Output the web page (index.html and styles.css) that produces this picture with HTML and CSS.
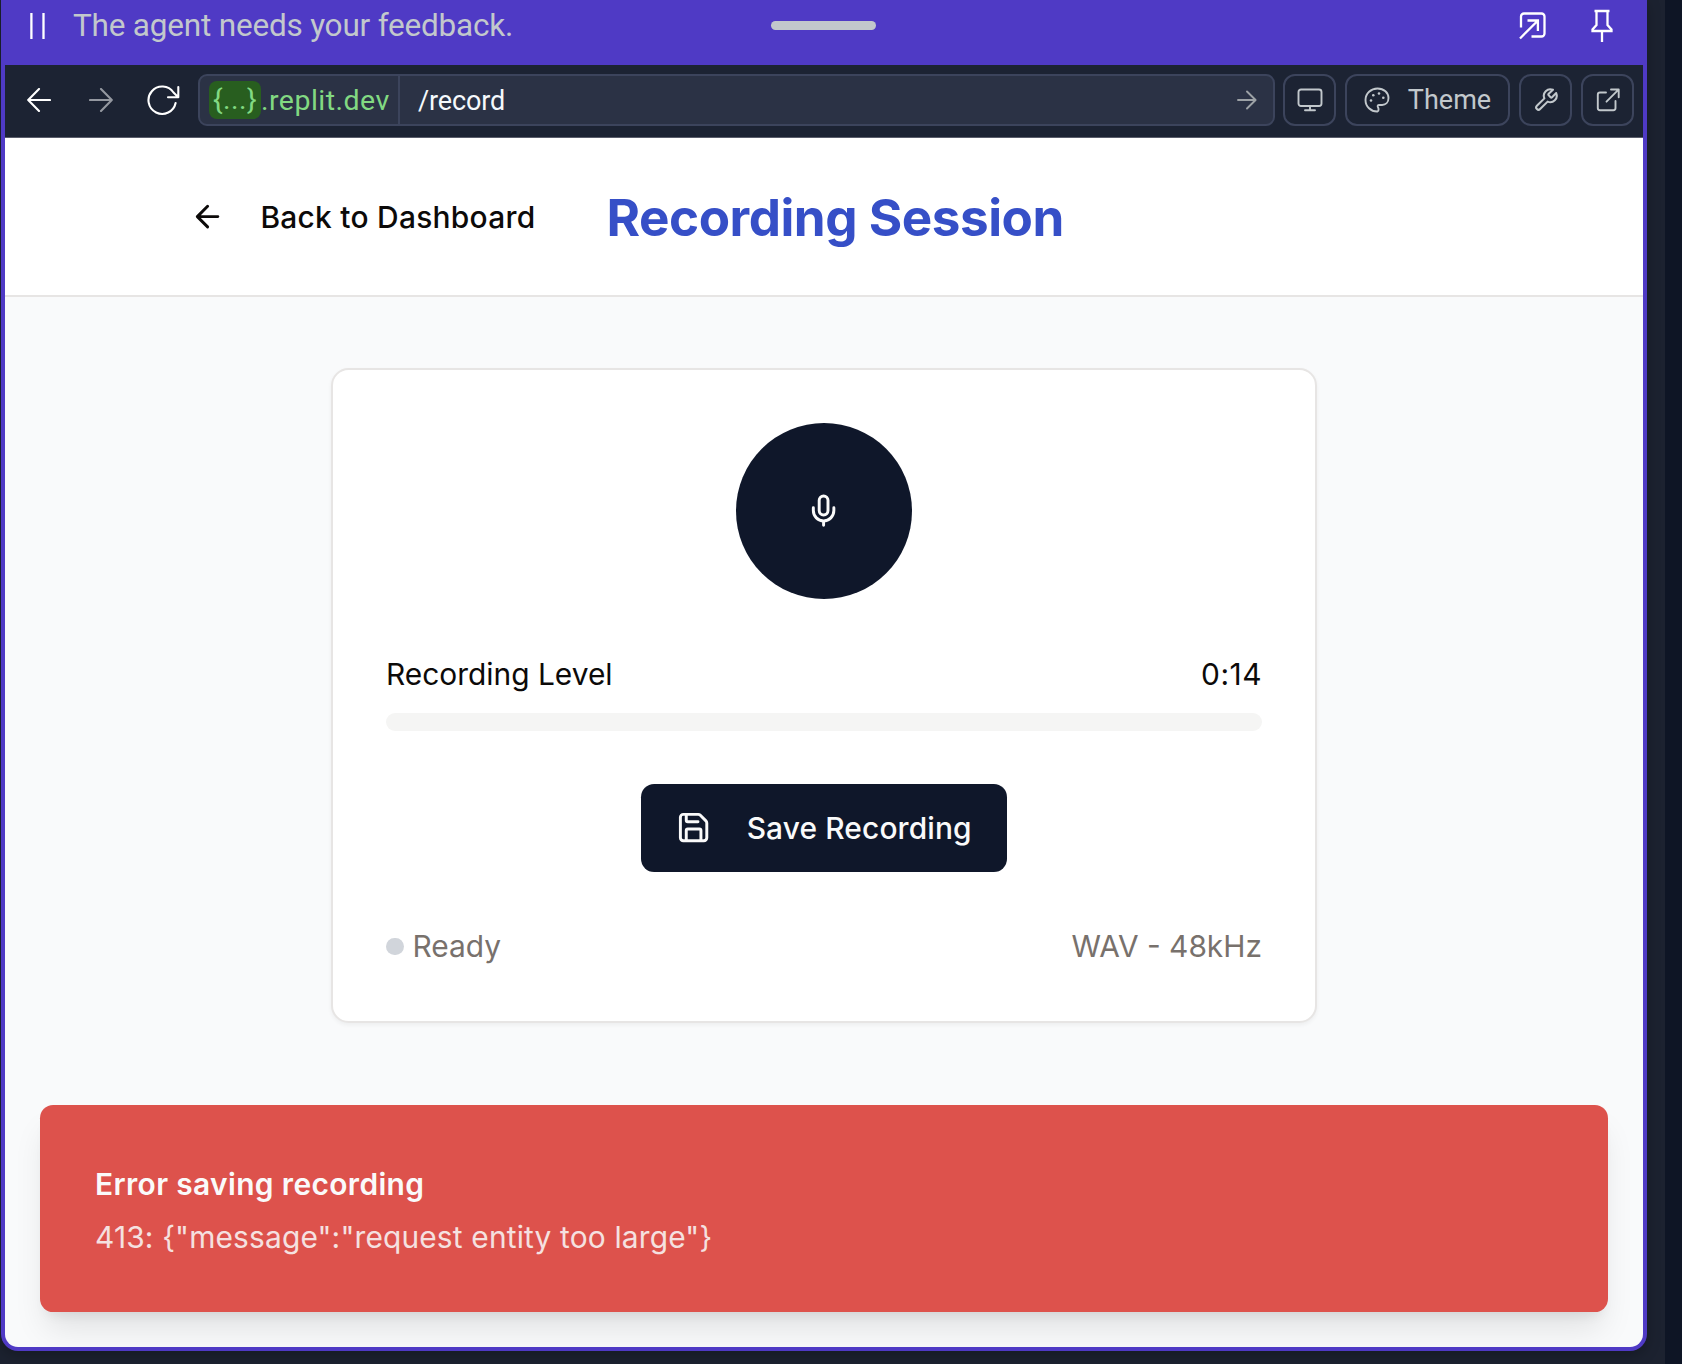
FILE: index.html
```html
<!DOCTYPE html>
<html lang="en">
<head>
<meta charset="utf-8">
<title>Recording Session</title>
<link rel="stylesheet" href="styles.css">
</head>
<body>
<div class="window">
  <div class="agent-bar">
    <div class="agent-status">
      <svg class="pause" width="16" height="28" viewBox="0 0 16 28"><path d="M1.4 1v26M13.5 1v26"/></svg>
      <span class="agent-text">The agent needs your feedback.</span>
    </div>
    <div class="handle"></div>
    <div class="agent-actions">
      <svg width="30" height="30" viewBox="0 0 30 30"><path d="M4 16.500V5.500a3 3 0 0 1 3-3h17.500a3 3 0 0 1 3 3v17a3 3 0 0 1-3 3H14.500M3 27.500 20.700 9.700M10.500 9.500h10.400v10.500"/></svg>
      <svg width="24" height="34" viewBox="0 0 24 34"><path d="M4.500 2h15M6.500 2v14l-4 4.500v1.500h19v-1.500l-4-4.500V2M12 22v11"/></svg>
    </div>
  </div>
  <div class="toolbar">
    <div class="nav">
      <svg width="24" height="24" viewBox="0 0 24 24"><path d="M23 12H1.500M12 1 1.200 12 12 23"/></svg>
      <svg class="dim" width="24" height="24" viewBox="0 0 24 24"><path d="M1 12h21.500M12 1l10.800 11L12 23"/></svg>
      <svg width="34" height="32" viewBox="0 0 34 32"><path d="M28.600 19A13.700 13.700 0 1 1 26.500 8.500L31 13M31.300 3v10.200H21"/></svg>
    </div>
    <div class="address">
      <div class="host"><span class="token">{...}</span><span class="domain">.replit.dev</span></div>
      <div class="path"><span class="path-text">/record</span>
        <svg width="20" height="20" viewBox="0 0 20 20"><path d="M1 10h17.500M10 1.500l8.600 8.500L10 18.500"/></svg>
      </div>
    </div>
    <div class="tools">
      <div class="tool"><svg width="26" height="24" viewBox="0 0 26 24"><rect x="1.500" y="1.500" width="23" height="16.500" rx="2.500"/><path d="M13 18v4M8 22.200h10"/></svg></div>
      <div class="tool theme">
        <svg width="26" height="26" viewBox="0 0 26 26"><path d="M13.500 24.500C6.800 24.700 1.500 19.500 1.500 13S7 1.500 13.500 1.500c6.500 0 11 4.300 11 9.600 0 4.400-3 6.900-6.400 6.900H15c-1.300 0-1.600 1-1.100 2 .8 1.500 1.100 3.800-.4 4.500z"/><g class="dots"><circle cx="7" cy="13.500" r="1.300"/><circle cx="9.300" cy="8.300" r="1.300"/><circle cx="15" cy="6.500" r="1.300"/><circle cx="19.300" cy="10.800" r="1.300"/></g></svg>
        <span>Theme</span>
      </div>
      <div class="tool"><svg width="26" height="26" viewBox="0 0 24 24"><path d="M14.500 6.300a1 1 0 0 0 0 1.400l1.700 1.700a1 1 0 0 0 1.400 0l3.800-3.800a6 6 0 0 1-7.900 7.900l-6.900 6.900a2.100 2.100 0 0 1-3-3l6.900-6.900a6 6 0 0 1 7.900-7.900z"/></svg></div>
      <div class="tool"><svg width="24" height="24" viewBox="0 0 24 24"><path d="M10 4.500H4a2.200 2.200 0 0 0-2.200 2.200v13.300A2.200 2.200 0 0 0 4 22.200h13.300a2.200 2.200 0 0 0 2.200-2.200v-7M15 1.500h7.700v7.700M22.500 1.700 10.500 13.700"/></svg></div>
    </div>
  </div>
  <div class="page">
    <header class="page-header">
      <a class="back">
        <svg class="icon" viewBox="0 0 24 24"><path d="m12 19-7-7 7-7M19 12H5"/></svg>
        <span>Back to Dashboard</span>
      </a>
      <h1>Recording Session</h1>
    </header>
    <main>
      <section class="card">
        <div class="mic"><svg class="icon" viewBox="0 0 24 24"><path d="M12 2a3 3 0 0 0-3 3v7a3 3 0 0 0 6 0V5a3 3 0 0 0-3-3ZM19 10v2a7 7 0 0 1-14 0v-2M12 19v3"/></svg></div>
        <div class="level">
          <div class="row"><span>Recording Level</span><span class="time">0:14</span></div>
          <div class="meter"></div>
        </div>
        <div class="save">
          <svg class="icon" viewBox="0 0 24 24"><path d="M15.200 3a2 2 0 0 1 1.400.6l3.800 3.800a2 2 0 0 1 .6 1.400V19a2 2 0 0 1-2 2H5a2 2 0 0 1-2-2V5a2 2 0 0 1 2-2zM17 21v-7a1 1 0 0 0-1-1H8a1 1 0 0 0-1 1v7M7 3v4a1 1 0 0 0 1 1h7"/></svg>
          <span class="save-text">Save Recording</span>
        </div>
        <div class="row meta"><span class="state"><i class="dot"></i>Ready</span><span>WAV - 48kHz</span></div>
      </section>
    </main>
    <div class="toast">
      <div class="toast-title">Error saving recording</div>
      <div class="toast-text">413: {"message":"request entity too large"}</div>
    </div>
  </div>
</div>
</body>
</html>
```
FILE: styles.css
```css
* { box-sizing: border-box; }
body {
  margin: 0;
  height: 1364px;
  padding-left: 1px;
  overflow: hidden;
  background: linear-gradient(to right, #1c2230 1665px, #0e1525 1665px);
  font-family: Inter, "Liberation Sans", sans-serif;
}
svg { display: block; flex: none; fill: none; stroke: currentColor; stroke-linecap: round; stroke-linejoin: round; }
.window {
  width: 1646px;
  height: 1351px;
  display: flex;
  flex-direction: column;
  border: solid #4f3ac5;
  border-width: 0 4px 4px;
  border-radius: 0 0 17px 17px;
  background: #4f3ac5;
  box-shadow: 0 4px 14px rgba(0, 0, 0, .25);
}
.agent-bar {
  height: 65px;
  padding: 0 29px 14px 25px;
  display: grid;
  grid-template-columns: 741px 105px 1fr;
  align-items: center;
  color: #fff;
}
.agent-status { display: flex; align-items: center; gap: 27px; }
.agent-bar svg { stroke-width: 2.3; stroke-linecap: butt; stroke-linejoin: miter; }
.agent-text { padding-top: 1px; font-family: Roboto, sans-serif; font-size: 31.500px; line-height: 40px; letter-spacing: -.2px; color: #c2c8cc; }
.handle { height: 9px; border-radius: 5px; background: #c2c8cc; }
.agent-actions { display: flex; justify-content: flex-end; align-items: center; gap: 43px; }
.toolbar {
  height: 73px;
  padding: 0 9px 2px 22px;
  display: flex;
  align-items: center;
  background: #1c2333;
  border-bottom: 1px solid #5a5d6b;
  color: #c2c8cc;
  font-family: Roboto, sans-serif;
  font-size: 27px;
}
.toolbar svg { stroke-width: 1.9; }
.nav { display: flex; align-items: center; gap: 38px; color: #fff; }
.nav svg { stroke-width: 2.1; }
.nav .dim { color: #9498a0; }
.nav svg:last-child { margin-left: -4px; }
.address {
  margin-left: 17px;
  width: 1078px;
  height: 52px;
  display: flex;
  border: 2px solid #3c445c;
  border-radius: 9px;
  background: #2b3245;
}
.host { width: 200px; padding-left: 9px; display: flex; align-items: center; border-right: 2px solid #3c445c; color: #82d982; font-size: 28.500px; letter-spacing: .48px; }
.token { width: 52px; height: 38px; border-radius: 8px; background: #285e1f; line-height: 37px; text-align: center; }
.path { flex: 1; padding: 0 16px 0 18px; display: flex; align-items: center; justify-content: space-between; color: #f5f9fc; }
.path-text { padding-top: 1px; letter-spacing: -.15px; }
.path svg { color: #9da2a6; }
.tools { margin-left: 8.500px; display: flex; gap: 9px; }
.tool { width: 53px; height: 52px; display: flex; align-items: center; justify-content: center; border: 2px solid #3c445c; border-radius: 12px; }
.tool.theme { width: 165px; gap: 18px; }
.theme .dots { fill: currentColor; stroke: none; }
.page { flex: 1; position: relative; overflow: hidden; border-radius: 0 0 13px 13px; background: #f9fafb; }
.page-header {
  height: 159px;
  padding-left: 185px;
  display: flex;
  align-items: center;
  background: #fff;
  border-bottom: 2px solid #e7e5e4;
  color: #0c0a09;
}
.icon { width: 35.2px; height: 35.2px; stroke-width: 2; }
.back { padding-top: 1px; display: flex; align-items: center; gap: 35.2px; font-size: 29.9px; font-weight: 500; letter-spacing: .28px; }
h1 { margin: 0 0 0 71px; padding-top: 1px; font-size: 51.2px; font-weight: 700; line-height: 70px; letter-spacing: -.48px; color: #364fc7; }
main { padding-top: 71px; display: flex; justify-content: center; }
.card {
  width: 985.600px;
  padding: 52.800px;
  display: flex;
  flex-direction: column;
  align-items: center;
  gap: 52.800px;
  border: 2px solid #e7e5e4;
  border-radius: 17.600px;
  background: #fff;
  box-shadow: 0 2px 4px rgba(0, 0, 0, .05);
  font-size: 29.9px;
  line-height: 45px;
  color: #0c0a09;
}
.mic { width: 176px; height: 176px; display: grid; place-items: center; border-radius: 50%; background: #0f172a; color: #fafafa; }
.level { width: 100%; display: grid; gap: 17.600px; }
.row { width: 100%; height: 44px; display: flex; justify-content: space-between; }
.time { letter-spacing: .5px; }
.meter { height: 17.600px; border-radius: 9px; background: #f5f5f4; }
.save {
  height: 88px;
  padding: 0 35.200px;
  display: flex;
  align-items: center;
  gap: 35.200px;
  border-radius: 13.200px;
  background: #0f172a;
  color: #fafafa;
  font-weight: 500;
}
.save-text { padding-top: 1px; letter-spacing: .13px; }
.meta { color: #78716c; }
.state { display: flex; align-items: center; gap: 8.800px; }
.dot { width: 17.600px; height: 17.600px; border-radius: 50%; background: #d1d5db; }
.toast {
  position: absolute;
  left: 35px;
  right: 35px;
  bottom: 35px;
  padding: 56.500px 55px 53.500px;
  display: grid;
  gap: 8.800px;
  border-radius: 13.200px;
  background: #dd524c;
  box-shadow: 0 22px 33px -6.600px rgba(0, 0, 0, .1), 0 8.800px 13px -8.800px rgba(0, 0, 0, .1);
  color: #fafafa;
  font-size: 29.9px;
  line-height: 44px;
}
.toast-title { font-weight: 600; letter-spacing: .37px; }
.toast-text { opacity: .85; letter-spacing: .16px; }
```
